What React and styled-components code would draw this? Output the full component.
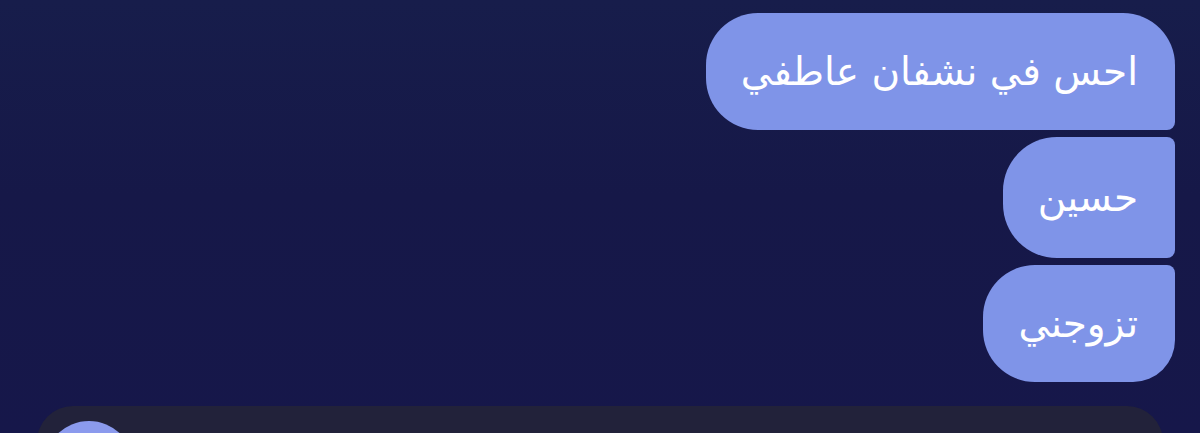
import styled, { createGlobalStyle } from "styled-components";

const GlobalStyle = createGlobalStyle`
	html, body {
		margin: 0;
		padding: 0;
		height: 100%;
		overflow: hidden;
		background: #161948;
	}
	#root {
		height: 100%;
	}
`;

const messages = [
	{ id: 1, text: "احس في نشفان عاطفي", height: 117, corners: "52px 52px 8px 52px" },
	{ id: 2, text: "حسين", height: 121, corners: "54px 8px 8px 54px" },
	{ id: 3, text: "تزوجني", height: 117, corners: "52px 8px 42px 52px" },
];

const App = () => {
	return (
		<Screen>
			<GlobalStyle />
			<Thread>
				{messages.map((m) => (
					<Bubble key={m.id} $height={m.height} $corners={m.corners}>
						{m.text}
					</Bubble>
				))}
			</Thread>
			<Composer>
				<Avatar />
			</Composer>
		</Screen>
	);
};

export default App;

const Screen = styled.div`
	height: 100%;
	display: flex;
	flex-direction: column;
	background: linear-gradient(180deg, #171d4b 0%, #161848 45%, #16174a 100%);
	font-family: "DejaVu Sans", "Noto Sans", sans-serif;
`;

const Thread = styled.div`
	display: flex;
	flex-direction: column;
	align-items: flex-end;
	gap: 7px;
	padding: 13px 25px 0 0;
`;

const Bubble = styled.div`
	direction: rtl;
	box-sizing: border-box;
	height: ${(p) => p.$height}px;
	padding: 0 37px 0 35px;
	display: flex;
	align-items: center;
	background: #7f94e8;
	color: #ffffff;
	font-size: 39px;
	border-radius: ${(p) => p.$corners};
`;

const Composer = styled.div`
	margin: 24px 37px 0;
	flex: 1;
	display: flex;
	align-items: flex-start;
	padding: 15px 0 0 7px;
	background: #22223a;
	border-radius: 36px 36px 0 0;
`;

const Avatar = styled.div`
	width: 90px;
	height: 90px;
	border-radius: 50%;
	background: #8b9aed;
`;
